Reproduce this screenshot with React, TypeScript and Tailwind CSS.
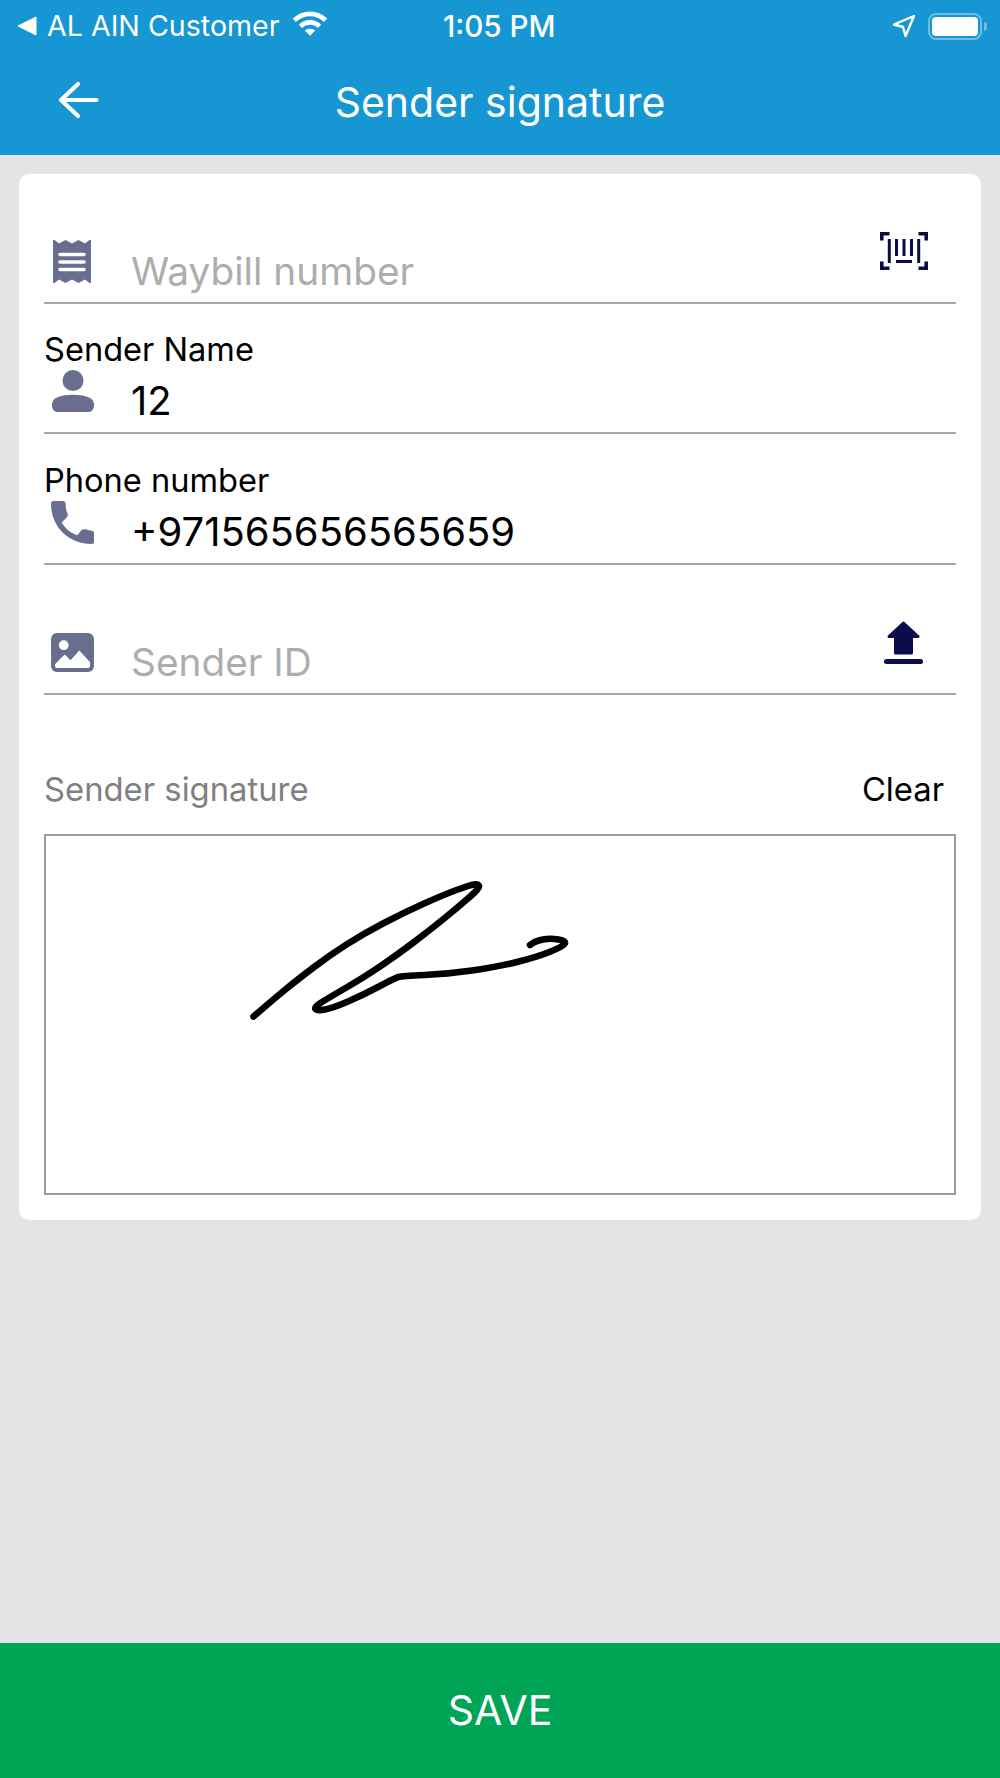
import React from "react";

const slate = "#696d8e";
const navy = "#0b0c4a";

const sig: [number, number][] = [
  [253.5, 1016.5], [275, 998], [297, 980], [330, 955], [363, 934], [403, 913], [443, 895], [470, 885], [478, 884], [480, 888],
  [457, 908], [430, 930], [397, 955], [363, 978], [330, 997], [314, 1007], [317, 1011], [333, 1008], [363, 995], [395, 978], [402, 976],
  [447, 974], [497, 967], [537, 957], [562, 947], [567, 941], [550, 938], [536, 941], [530, 945],
];
function smooth(pts: [number, number][]) {
  let d = `M${pts[0][0]} ${pts[0][1]}`;
  for (let i = 1; i < pts.length - 1; i++) {
    const mx = (pts[i][0] + pts[i + 1][0]) / 2;
    const my = (pts[i][1] + pts[i + 1][1]) / 2;
    d += ` Q${pts[i][0]} ${pts[i][1]} ${mx} ${my}`;
  }
  const l = pts[pts.length - 1];
  return d + ` L${l[0]} ${l[1]}`;
}

function Field({ label, value, placeholder, icon, action, tall }: { label?: string; value?: string; placeholder?: string; icon: React.ReactNode; action?: React.ReactNode; tall?: boolean }) {
  return (
    <div className={`${tall ? "h-[131px]" : "h-[130px]"} border-b-2 border-[#a8a8a8] flex flex-col justify-end`}>
      {label && <div className="text-[32.6px] leading-[36px] text-black mb-[7px]">{label}</div>}
      <div className="flex items-start h-[58px]">
        <div className="w-[87px] h-full shrink-0 relative">{icon}</div>
        <div className={`flex-1 leading-[54px] ${value ? "text-[40px] text-black" : "text-[38.8px] text-[#adadad]"}`}>{value ?? placeholder}</div>
        {action}
      </div>
    </div>
  );
}

export default function App() {
  return (
    <div className="w-[1000px] h-[1778px] bg-[#e4e4e4] flex flex-col font-['Inter','Liberation_Sans',sans-serif]">
      <header className="h-[155px] bg-[#1696d2] text-white shrink-0">
        <div className="h-[52px] flex items-center justify-between pl-[18px] pr-[13px] relative">
          <div className="flex items-center text-[28.6px] leading-none">
            <svg width="20" height="20" viewBox="0 0 20 20" className="mr-[9px]"><path d="M0 10 L18 1 V19 Z" fill="#fff" stroke="#fff" strokeLinejoin="round" /></svg>
            <span>AL AIN Customer</span>
            <svg width="36" height="27" viewBox="0 0 38 28" className="ml-[12px] -mt-[6px]" fill="none" stroke="#fff" strokeWidth="5">
              <path d="M2.5 10.5 C12 1.5 26 1.5 35.5 10.5" />
              <path d="M9 17 C14.5 11.5 23.5 11.5 29 17" />
              <path d="M19 27 L13.5 21.5 C16.5 19 21.5 19 24.5 21.5 Z" fill="#fff" stroke="none" />
            </svg>
          </div>
          <div className="absolute left-[443px] top-[11px] text-[29.6px] leading-[30px] font-medium">1:05 PM</div>
          <div className="flex items-center">
            <svg width="24" height="24" viewBox="0 0 24 24" className="mr-[12px]" fill="none" stroke="#fff" strokeWidth="2.4" strokeLinejoin="round"><path d="M2 10.5 L22 2 L13.5 22 L11 13 Z" /></svg>
            <div className="w-[54px] h-[27px] rounded-[8px] border-2 border-[#6fbce2] p-[2px]"><div className="w-full h-full bg-white rounded-[4px]" /></div>
            <div className="w-[3px] h-[9px] bg-[#6fbce2] rounded-r-full ml-[2px]" />
          </div>
        </div>
        <div className="flex items-center h-[103px] relative pb-[7px]">
          <svg width="41" height="38" viewBox="0 0 41 38" className="ml-[58px]" fill="none" stroke="#fff" strokeWidth="4.2" strokeLinecap="round" strokeLinejoin="round"><path d="M38.5 19 H3 M20 3 L3 19 L20 35" /></svg>
          <div className="absolute left-0 right-0 top-[26px] text-center text-[41px] leading-[48px]">Sender signature</div>
        </div>
      </header>

      <main className="flex-1 pt-[19px] px-[19px]">
        <div className="bg-white rounded-[10px] px-[25px] pb-[25px]">
          <Field placeholder="Waybill number"
            icon={<svg width="38" height="43" viewBox="0 0 38 43" className="absolute left-[9px] -top-[4px]"><path fill={slate} d="M0 0 L1.5 0 L6 3.5 L12.5 0 L19 3.5 L25.5 0 L32 3.5 L36.5 0 L38 0 V43 L36.5 43 L32 39.5 L25.5 43 L19 39.5 L12.5 43 L6 39.5 L1.5 43 L0 43 Z" /><path stroke="#fff" strokeWidth="3.5" strokeLinecap="round" d="M7 14.5 H31 M7 22 H31 M7 29.5 H31" /></svg>}
            action={<svg width="48" height="38" viewBox="0 0 48 38" className="-mt-[12px] mr-[28px]" fill="none" stroke={navy} strokeWidth="3"><path strokeWidth="3.6" d="M9.5 1.8 H1.8 V8.5 M38.5 1.8 H46.2 V8.5 M9.5 36.2 H1.8 V29.5 M38.5 36.2 H46.2 V29.5" /><path d="M9.3 7 V31 M38.7 7 V31 M16.5 7 V24 M24 7 V24 M31.5 7 V24 M16 29.5 H32" /></svg>} />
          <Field label="Sender Name" value="12"
            icon={<svg width="44" height="44" viewBox="0 0 44 46" className="absolute left-[7px] -top-[4px]" fill={slate}><circle cx="22" cy="11" r="11" /><path d="M0 36 C0 29 10 26 22 26 C34 26 44 29 44 36 C44 41 42 44 37 44 H7 C2 44 0 41 0 36 Z" /></svg>} />
          <Field tall label="Phone number" value="+971565656565659"
            icon={<svg width="43" height="43" viewBox="0 0 44 44" className="absolute left-[7px] -top-[4px]" fill={slate}><path d="M3 0 H12 C14 0 15 1 15 3 C15 7 15.5 10 17 13 C17.5 15 17 16 16 17 L11 22 C15 29 21 33 27 35 L31 30 C32.5 29 34 28.5 36 29 C38 30 40.5 30.5 42 30.5 C43.5 30.5 44 31.5 44 33 V42 C44 43.5 43 44 41.5 44 C18 44 0 26 0 3 C0 1 1 0 3 0 Z" /></svg>} />
          <Field placeholder="Sender ID"
            icon={<svg width="43" height="39" viewBox="0 0 44 40" className="absolute left-[7px] -top-[2px]"><rect width="44" height="40" rx="6" fill={slate} /><circle cx="13" cy="12.5" r="5" fill="#fff" /><path fill="#fff" d="M4 32 L14 22 L20 28 L29 18 L40 30 V33 C40 35 39 36 37 36 H7 C5 36 4 35 4 33 Z" /></svg>}
            action={<svg width="39" height="43" viewBox="0 0 39 43" className="-mt-[14px] mr-[33px]" fill={navy}><path stroke={navy} strokeWidth="3" strokeLinejoin="round" d="M19.5 2 L34 15.5 H27.5 V32 H11.5 V15.5 H5 Z" /><rect x="0" y="38" width="39" height="5" rx="2.5" /></svg>} />

          <div className="flex justify-between items-center h-[139px] pt-[50px] pr-[12px]">
            <span className="text-[32.8px] text-[#808080]">Sender signature</span>
            <span className="text-[32.8px] text-black">Clear</span>
          </div>
          <div className="h-[361px] border-2 border-[#9a9a9a]">
            <svg width="908" height="357" viewBox="46 836 908 357" className="block" fill="none" stroke="#000" strokeWidth="6.6" strokeLinecap="round" strokeLinejoin="round">
              <path d={smooth(sig)} />
            </svg>
          </div>
        </div>
      </main>

      <button className="h-[135px] shrink-0 bg-[#00a455] text-white text-[41px] flex items-center justify-center">SAVE</button>
    </div>
  );
}
